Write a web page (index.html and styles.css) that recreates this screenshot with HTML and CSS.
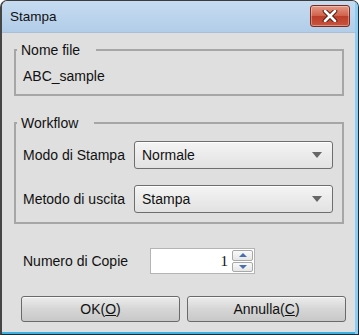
FILE: index.html
```html
<!DOCTYPE html>
<html lang="it">
<head>
    <meta charset="UTF-8">
    <meta name="viewport" content="width=device-width, initial-scale=1.0">
    <title>Stampa</title>
    <link rel="stylesheet" href="styles.css">
</head>
<body>
    <div class="window">
        <!-- Barra del titolo -->
        <div class="titlebar">
            <span class="title">Stampa</span>
            <button class="close" aria-label="Chiudi">
                <svg width="18" height="12" viewBox="0 0 18 12">
                    <path d="M4 1 L14 11 M14 1 L4 11" stroke="#5a1a12" stroke-width="4.6" stroke-linecap="round"/>
                    <path d="M4 1 L14 11 M14 1 L4 11" stroke="#ffffff" stroke-width="2.6" stroke-linecap="round"/>
                </svg>
            </button>
        </div>

        <fieldset class="group group-file">
            <legend>Nome file</legend>
            <div class="filename">ABC_sample</div>
        </fieldset>

        <fieldset class="group group-workflow">
            <legend>Workflow</legend>
            <div class="row">
                <label class="row-label">Modo di Stampa</label>
                <div class="select"><span>Normale</span><i class="arrow"></i></div>
            </div>
            <div class="row">
                <label class="row-label">Metodo di uscita</label>
                <div class="select"><span>Stampa</span><i class="arrow"></i></div>
            </div>
        </fieldset>

        <div class="copies">
            <label class="copies-label">Numero di Copie</label>
            <div class="spin">
                <span class="spin-value">1</span>
                <div class="spin-buttons">
                    <div class="spin-btn"><i class="tri-up"></i></div>
                    <div class="spin-btn"><i class="tri-down"></i></div>
                </div>
            </div>
        </div>

        <div class="actions">
            <button class="btn">OK(<u>O</u>)</button>
            <button class="btn">Annulla(<u>C</u>)</button>
        </div>
    </div>
</body>
</html>
```

FILE: styles.css
```css
* {
    box-sizing: border-box;
}
body {
    margin: 0;
    background-color: #ffffff;
    font-family: 'Liberation Sans', Arial, sans-serif;
    font-size: 14px;
    color: #111;
}
.window {
    width: 359px;
    height: 335px;
    display: flex;
    flex-direction: column;
    background-color: #dfdfdf;
    border-top: 1px solid #3c3c3c;
    border-left: 2px solid #454545;
    border-right: 1px solid #1e2b36;
    border-bottom: 1px solid #1e2b36;
    border-radius: 7px 7px 0 0;
    box-shadow: inset -3px 0 #8ccdf0, inset 0 -2px #3cb2e2;
    overflow: hidden;
}
.titlebar {
    height: 32px;
    display: flex;
    align-items: center;
    justify-content: space-between;
    padding: 0 5px 0 8px;
    background: linear-gradient(#c6dbf1, #b2cde9);
    border-right: 3px solid #8ccdf0;
    border-bottom: 1px solid #a9bfd6;
}
.title {
    font-size: 13.5px;
    color: #111;
}
.close {
    width: 40px;
    height: 22px;
    margin-top: -2px;
    padding: 0;
    display: flex;
    align-items: center;
    justify-content: center;
    border: 1px solid #7c2a1e;
    border-radius: 3px;
    background: linear-gradient(#e69a88, #d0604a 50%, #bb3d2a 51%, #c9543e);
    box-shadow: inset 0 0 0 1px rgba(255, 255, 255, 0.35);
}

/* gruppi */
.group {
    margin: 0 14px 0 12px;
    border: 2px solid #a6a6a6;
    padding: 10px 9px 10px 7px;
}
.group legend {
    margin-left: -6px;
    padding: 0 16px 0 4px;
    line-height: 16px;
}
.group-file {
    margin-top: 9px;
}
.filename {
    line-height: 16px;
}
.group-workflow {
    margin-top: 19px;
    padding-bottom: 9px;
}
.row {
    display: flex;
    align-items: center;
}
.row + .row {
    margin-top: 16px;
}
.row-label {
    width: 111px;
    white-space: nowrap;
}
.select {
    flex: 1;
    height: 28px;
    display: flex;
    align-items: center;
    justify-content: space-between;
    padding: 0 10px 0 7px;
    border: 1px solid #6e6e6e;
    border-radius: 3px;
    background: linear-gradient(#f4f4f4, #e2e2e2);
    box-shadow: inset 0 1px #ffffff;
}
.arrow {
    width: 0;
    height: 0;
    border-left: 5px solid transparent;
    border-right: 5px solid transparent;
    border-top: 6px solid #666;
}

/* numero copie */
.copies {
    margin: 24px 0 0 21px;
    display: flex;
    align-items: center;
}
.copies-label {
    width: 127px;
}
.spin {
    width: 105px;
    height: 26px;
    display: flex;
    align-items: center;
    justify-content: flex-end;
    padding-right: 1px;
    background-color: #ffffff;
    border: 1px solid #b4b4b4;
}
.spin-value {
    font-family: 'Liberation Serif', 'Times New Roman', serif;
    font-size: 15px;
    margin-right: 4px;
}
.spin-buttons {
    width: 21px;
    height: 22px;
    display: flex;
    flex-direction: column;
    gap: 1px;
}
.spin-btn {
    flex: 1;
    display: flex;
    align-items: center;
    justify-content: center;
    border: 1px solid #a8a8a8;
    border-radius: 2px;
    background: linear-gradient(#fafafa, #e6e6e6);
}
.tri-up {
    border-left: 4px solid transparent;
    border-right: 4px solid transparent;
    border-bottom: 4px solid #4a6fb0;
}
.tri-down {
    border-left: 4px solid transparent;
    border-right: 4px solid transparent;
    border-top: 4px solid #4a6fb0;
}

/* pulsanti */
.actions {
    margin: 22px 0 0 19px;
    display: flex;
    gap: 7px;
}
.btn {
    width: 159px;
    height: 26px;
    padding: 0;
    font-family: 'Liberation Sans', Arial, sans-serif;
    font-size: 14px;
    color: #111;
    border: 1px solid #6a6a6a;
    border-radius: 3px;
    background: linear-gradient(#ececec, #d6d6d6 50%, #c8c8c8);
    box-shadow: inset 0 1px #f8f8f8;
}
```
